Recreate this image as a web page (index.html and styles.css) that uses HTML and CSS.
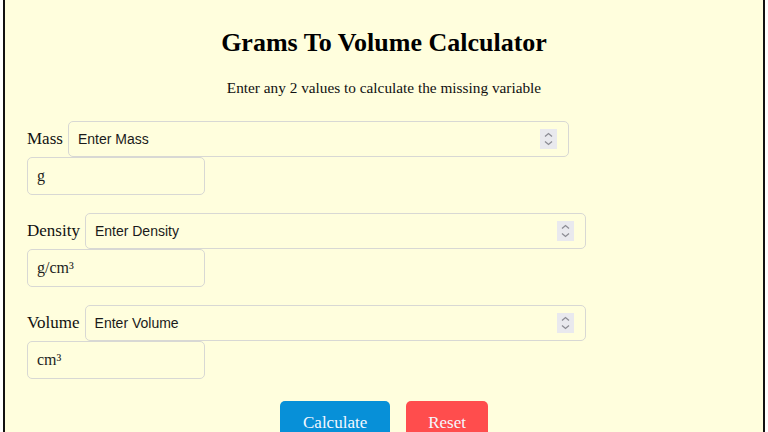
FILE: index.html
```html
<!DOCTYPE html>
<html lang="en">
<head>
<meta charset="utf-8">
<title>Grams To Volume Calculator</title>
<link rel="stylesheet" href="styles.css">
</head>
<body>
<div class="calc">
  <h1 class="title">Grams To Volume Calculator</h1>
  <p class="subtitle">Enter any 2 values to calculate the missing variable</p>

  <div class="group">
    <div class="row">
      <span class="label">Mass</span>
      <div class="field">
        <span class="ph">Enter Mass</span>
        <span class="spin"><svg width="17" height="20" viewBox="0 0 17 20"><path d="M5 7.5 L8.5 4.5 L12 7.5 M5 12.5 L8.5 15.5 L12 12.5" fill="none" stroke="#8c8c94" stroke-width="1.3"/></svg></span>
      </div>
    </div>
    <div class="unit">g</div>
  </div>

  <div class="group">
    <div class="row">
      <span class="label">Density</span>
      <div class="field">
        <span class="ph">Enter Density</span>
        <span class="spin"><svg width="17" height="20" viewBox="0 0 17 20"><path d="M5 7.5 L8.5 4.5 L12 7.5 M5 12.5 L8.5 15.5 L12 12.5" fill="none" stroke="#8c8c94" stroke-width="1.3"/></svg></span>
      </div>
    </div>
    <div class="unit">g/cm³</div>
  </div>

  <div class="group">
    <div class="row">
      <span class="label">Volume</span>
      <div class="field">
        <span class="ph">Enter Volume</span>
        <span class="spin"><svg width="17" height="20" viewBox="0 0 17 20"><path d="M5 7.5 L8.5 4.5 L12 7.5 M5 12.5 L8.5 15.5 L12 12.5" fill="none" stroke="#8c8c94" stroke-width="1.3"/></svg></span>
      </div>
    </div>
    <div class="unit">cm³</div>
  </div>

  <div class="actions">
    <button class="btn btn-calc">Calculate</button>
    <button class="btn btn-reset">Reset</button>
  </div>
</div>
</body>
</html>
```

FILE: styles.css
```css
html, body {
  margin: 0;
  padding: 0;
  background: #ffffff;
  height: 100%;
  overflow: hidden;
}

.calc {
  margin: 0 3px;
  min-height: 100%;
  border-left: 2px solid #111;
  border-right: 2px solid #111;
  background: #fffedd;
  padding: 28px 22px 20px 22px;
  box-sizing: border-box;
  font-family: "Liberation Serif", "Times New Roman", serif;
  color: #111;
}

.title {
  margin: 0;
  font-size: 26px;
  line-height: 30px;
  font-weight: bold;
  text-align: center;
  color: #000;
}

.subtitle {
  margin: 20px 0 0 0;
  font-size: 15.3px;
  line-height: 20px;
  text-align: center;
  color: #111;
}

.group {
  margin-top: 18px;
}

.group:first-of-type {
  margin-top: 23px;
}

.row {
  display: flex;
  align-items: center;
  gap: 5px;
}

.label {
  font-size: 17px;
  line-height: 20px;
  color: #111;
}

.field {
  width: 501px;
  height: 36px;
  box-sizing: border-box;
  border: 1px solid #d8d8d4;
  border-radius: 5px;
  display: flex;
  align-items: center;
  justify-content: space-between;
  padding: 0 11px 0 9px;
}

.ph {
  font-family: "Liberation Sans", Arial, sans-serif;
  font-size: 14px;
  color: #1a1a1a;
}

.spin {
  width: 17px;
  height: 20px;
  background: #e9e9ee;
  display: flex;
}

.unit {
  width: 178px;
  height: 38px;
  box-sizing: border-box;
  border: 1px solid #d8d8d4;
  border-radius: 5px;
  padding: 0 9px;
  display: flex;
  align-items: center;
  font-size: 16px;
  color: #1e1e1e;
}

.actions {
  margin-top: 22px;
  display: flex;
  justify-content: center;
  gap: 16px;
}

.btn {
  font-family: "Liberation Serif", "Times New Roman", serif;
  font-size: 17px;
  line-height: 20px;
  border: none;
  border-radius: 5px;
  padding: 12px 23px 10px 23px;
  color: #f4f8ff;
  cursor: pointer;
}

.btn-calc {
  background: #0790d8;
}

.btn-reset {
  background: #ff4d4d;
  padding-left: 22px;
  padding-right: 22px;
}
```
